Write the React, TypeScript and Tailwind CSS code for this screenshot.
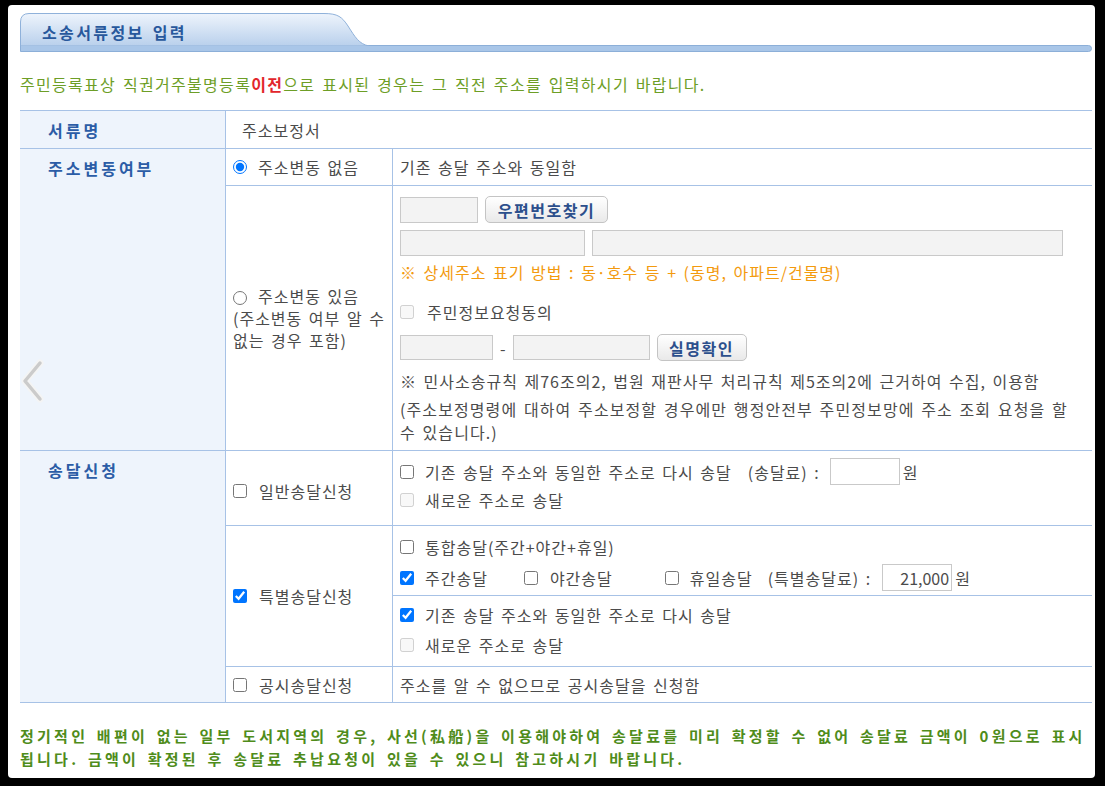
import React from 'react';

// 소송서류정보 입력 form – address change / service request section

const Check = ({ checked, disabled }: { checked?: boolean; disabled?: boolean }) => (
  <input
    type="checkbox"
    defaultChecked={checked}
    disabled={disabled}
    className="m-0 h-[14px] w-[14px] shrink-0"
  />
);

const Radio = ({ checked, name }: { checked?: boolean; name: string }) => (
  <input type="radio" name={name} defaultChecked={checked} className="m-0 h-[14px] w-[14px] shrink-0 align-[-2px]" />
);

const GrayButton = ({ label, width }: { label: string; width: string }) => (
  <button
    type="button"
    className={`${width} h-[27px] rounded-[5px] border border-[#c4c4c4] bg-gradient-to-b from-white to-[#e9e9e9] text-[16px] font-semibold tracking-[1.5px] text-[#2c4f8c]`}
  >
    {label}
  </button>
);

const TabHeader = () => (
  <div>
    <div className="relative h-[32px] w-[350px]">
      <svg width="350" height="33" viewBox="0 0 350 33" className="absolute left-0 top-0">
        <defs>
          <linearGradient id="tabFill" x1="0" y1="0" x2="0" y2="1">
            <stop offset="0" stopColor="#eef4fc" />
            <stop offset="1" stopColor="#b9d0ec" />
          </linearGradient>
        </defs>
        <path
          d="M0.5,33 L0.5,9 Q0.5,0.5 9,0.5 L304,0.5 C318,0.5 322,4 328,13 C335,24 339,31 349,33 Z"
          fill="url(#tabFill)"
          stroke="#8fb1da"
          strokeWidth="1"
        />
      </svg>
      <span className="relative block pl-[22px] pt-[8px] text-[16px] font-bold leading-[22px] tracking-[2.4px] text-[#28589c]">
        소송서류정보 입력
      </span>
    </div>
    <div className="h-[7px] rounded-r-[4px] border border-[#8cafd8] bg-[#a9c6e8]" />
  </div>
);

const Chevron = () => (
  <svg width="26" height="44" viewBox="0 0 26 44" className="absolute left-[12px] top-[354px]">
    <path d="M20,4 L5,22 L20,40" fill="none" stroke="#f4f4f4" strokeWidth="7" strokeLinecap="round" strokeLinejoin="round" />
    <path d="M20,4 L5,22 L20,40" fill="none" stroke="#cbcbcb" strokeWidth="3.5" strokeLinecap="round" strokeLinejoin="round" />
  </svg>
);

const Head = ({ label, className }: { label: string; className: string }) => (
  <div className={`${className} bg-[#eef4fc] pl-[28px] pt-[9px] text-[16px] font-bold leading-[20px] tracking-[3px] text-[#2b5ca6]`}>
    {label}
  </div>
);

export default function App() {
  return (
    <div className="h-[786px] w-[1105px] bg-black pb-[8px] pl-[8px] pr-[10px] pt-[5px]">
      <div className="relative h-[773px] rounded-[4px] bg-white pl-[12px] pr-[3px] pt-[8px] font-['Noto_Sans_CJK_KR','Noto_Sans',sans-serif] text-[16px] tracking-[1px] text-[#4b4b4b] [word-spacing:2px]">
        <TabHeader />

        <p className="mt-[22px] leading-[20px] tracking-[1.3px] text-[#6d9e26]">
          주민등록표상 직권거주불명등록<span className="font-bold text-[#e2262c]">이전</span>으로 표시된 경우는 그 직전 주소를 입력하시기 바랍니다.
        </p>

        <div className="mt-[16px] grid grid-cols-[205px_166px_1fr] grid-rows-[37px_36px_264px_74px_69px_70px_35px] gap-px border-y border-[#a7c2e6] bg-[#a7c2e6] leading-[20px]">
          {/* 서류명 */}
          <Head label="서류명" className="row-start-1 col-start-1" />
          <div className="col-span-2 flex items-center bg-white pl-[16px]">주소보정서</div>

          {/* 주소변동여부 */}
          <Head label="주소변동여부" className="row-span-2 row-start-2 col-start-1" />
          <div className="row-start-2 col-start-2 flex items-center gap-[11px] bg-white pl-[7px]">
            <Radio name="addr" checked />
            <span>주소변동 없음</span>
          </div>
          <div className="row-start-2 col-start-3 flex items-center bg-white pl-[7px]">기존 송달 주소와 동일함</div>

          <div className="row-start-3 col-start-2 flex items-center bg-white pl-[7px] leading-[22px]">
            <p>
              <Radio name="addr" />
              <span className="ml-[11px]">주소변동 있음</span>
              <br />
              (주소변동 여부 알 수
              <br />
              없는 경우 포함)
            </p>
          </div>
          <div className="row-start-3 col-start-3 flex flex-col bg-white pl-[7px] pt-[10px]">
            <div className="flex items-center gap-[7px]">
              <input readOnly className="h-[26px] w-[78px] border border-[#c9c9c9] bg-[#f3f3f3]" />
              <GrayButton label="우편번호찾기" width="w-[123px]" />
            </div>
            <div className="mt-[7px] flex gap-[7px]">
              <input readOnly className="h-[26px] w-[185px] border border-[#c9c9c9] bg-[#f3f3f3]" />
              <input readOnly className="h-[26px] w-[471px] border border-[#c9c9c9] bg-[#f3f3f3]" />
            </div>
            <p className="mt-[6px] text-[#f39a0e]">※ 상세주소 표기 방법 : 동·호수 등 + (동명, 아파트/건물명)</p>
            <label className="mt-[20px] flex items-center gap-[13px]">
              <Check disabled />
              <span>주민정보요청동의</span>
            </label>
            <div className="mt-[12px] flex items-center">
              <input readOnly className="h-[25px] w-[93px] border border-[#c9c9c9] bg-[#f3f3f3]" />
              <span className="mx-[7px] tracking-[0px]">-</span>
              <input readOnly className="h-[25px] w-[137px] border border-[#c9c9c9] bg-[#f3f3f3]" />
              <span className="ml-[7px]">
                <GrayButton label="실명확인" width="w-[90px]" />
              </span>
            </div>
            <p className="mt-[10px]">※ 민사소송규칙 제76조의2, 법원 재판사무 처리규칙 제5조의2에 근거하여 수집, 이용함</p>
            <p className="mt-[7px] leading-[23px] tracking-[1.1px]">
              (주소보정명령에 대하여 주소보정할 경우에만 행정안전부 주민정보망에 주소 조회 요청을 할
              <br />
              수 있습니다.)
            </p>
          </div>

          {/* 송달신청 */}
          <Head label="송달신청" className="row-span-4 row-start-4 col-start-1" />
          <label className="row-start-4 col-start-2 flex items-center gap-[12px] bg-white pl-[7px] pt-[5px]">
            <Check />
            <span>일반송달신청</span>
          </label>
          <div className="row-start-4 col-start-3 flex flex-col bg-white pl-[7px] pt-[7px]">
            <div className="flex items-center">
              <Check />
              <span className="ml-[11px]">기존 송달 주소와 동일한 주소로 다시 송달</span>
              <span className="ml-[16px]">(송달료) :</span>
              <input readOnly className="ml-[10px] h-[27px] w-[70px] border border-[#c9c9c9] bg-white" />
              <span className="ml-[3px]">원</span>
            </div>
            <div className="mt-[5px] flex items-center gap-[11px]">
              <Check disabled />
              <span>새로운 주소로 송달</span>
            </div>
          </div>

          <label className="row-span-2 row-start-5 col-start-2 flex items-center gap-[12px] bg-white pl-[7px]">
            <Check checked />
            <span>특별송달신청</span>
          </label>
          <div className="row-start-5 col-start-3 flex flex-col bg-white pl-[7px] pt-[11px]">
            <div className="flex items-center gap-[11px]">
              <Check />
              <span>통합송달(주간+야간+휴일)</span>
            </div>
            <div className="mt-[7px] flex items-center">
              <Check checked />
              <span className="ml-[11px]">주간송달</span>
              <span className="ml-[36px] flex"><Check /></span>
              <span className="ml-[12px]">야간송달</span>
              <span className="ml-[52px] flex"><Check /></span>
              <span className="ml-[11px]">휴일송달</span>
              <span className="ml-[15px]">(특별송달료) :</span>
              <input
                readOnly
                value="21,000"
                className="ml-[11px] h-[27px] w-[70px] border border-[#c9c9c9] bg-white pr-[2px] text-right tracking-[0px] text-[#4b4b4b]"
              />
              <span className="ml-[3px]">원</span>
            </div>
          </div>
          <div className="row-start-6 col-start-3 flex flex-col bg-white pl-[7px] pt-[9px]">
            <div className="flex items-center gap-[11px]">
              <Check checked />
              <span>기존 송달 주소와 동일한 주소로 다시 송달</span>
            </div>
            <div className="mt-[10px] flex items-center gap-[11px]">
              <Check disabled />
              <span>새로운 주소로 송달</span>
            </div>
          </div>

          <label className="row-start-7 col-start-2 flex items-center gap-[12px] bg-white pl-[7px]">
            <Check />
            <span>공시송달신청</span>
          </label>
          <div className="row-start-7 col-start-3 flex items-center bg-white pl-[7px]">
            주소를 알 수 없으므로 공시송달을 신청함
          </div>
        </div>

        <p className="mt-[21px] text-[15px] font-bold leading-[23px] tracking-[3.25px] text-[#4f8c1b]">
          정기적인 배편이 없는 일부 도서지역의 경우, 사선(私船)을 이용해야하여 송달료를 미리 확정할 수 없어 송달료 금액이 0원으로 표시
          <br />
          됩니다. 금액이 확정된 후 송달료 추납요청이 있을 수 있으니 참고하시기 바랍니다.
        </p>

        <Chevron />
      </div>
    </div>
  );
}
